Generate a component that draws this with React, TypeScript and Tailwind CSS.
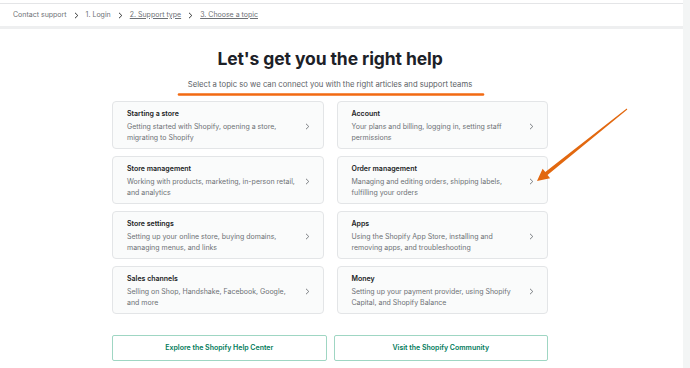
import React from "react";

const topics = [
  { title: "Starting a store", lines: ["Getting started with Shopify, opening a store,", "migrating to Shopify"] },
  { title: "Account", lines: ["Your plans and billing, logging in, setting staff", "permissions"] },
  { title: "Store management", lines: ["Working with products, marketing, in-person retail,", "and analytics"] },
  { title: "Order management", lines: ["Managing and editing orders, shipping labels,", "fulfilling your orders"] },
  { title: "Store settings", lines: ["Setting up your online store, buying domains,", "managing menus, and links"] },
  { title: "Apps", lines: ["Using the Shopify App Store, installing and", "removing apps, and troubleshooting"] },
  { title: "Sales channels", lines: ["Selling on Shop, Handshake, Facebook, Google,", "and more"] },
  { title: "Money", lines: ["Setting up your payment provider, using Shopify", "Capital, and Shopify Balance"] },
];

const Chevron = ({ className }: { className?: string }) => (
  <svg width="5" height="7" viewBox="0 0 5 7" className={className}>
    <path d="M1 0.8 L3.8 3.5 L1 6.2" fill="none" stroke="currentColor" strokeWidth="0.9" />
  </svg>
);

const App = () => {
  return (
    <div className="relative w-[690px] h-[368px] bg-white flex overflow-hidden font-['Inter',sans-serif]">
      <div className="w-[683px] flex flex-col">
        <div className="mt-[3px] border-t border-[#e4e5e7] h-[23px] flex items-center pl-[13px] text-[7px] text-[#6d7175] gap-[7px]">
          <span>Contact support</span>
          <Chevron className="text-[#202223]" />
          <span>1. Login</span>
          <Chevron className="text-[#202223]" />
          <span className="underline">2. Support type</span>
          <Chevron className="text-[#202223]" />
          <span className="underline">3. Choose a topic</span>
        </div>
        <div className="h-[3px] bg-[#eeeff0]" />

        <div className="ml-[112px] w-[436px] flex flex-col">
          <h1 className="mt-[19px] text-center text-[17.5px] leading-[22px] font-bold text-[#1c2127] tracking-[-0.1px]">
            Let's get you the right help
          </h1>
          <p className="mt-[9px] text-center text-[7.7px] leading-[11px] text-[#5c6166]">
            Select a topic so we can connect you with the right articles and support teams
          </p>

          <div className="mt-[11px] grid grid-cols-2 gap-x-[13px] gap-y-[7px]">
            {topics.map((t) => (
              <div
                key={t.title}
                className="h-[48px] rounded-[4px] border border-[#e3e5e7] bg-[#fafbfb] flex items-center pl-[14px] pr-[13px]"
              >
                <div className="flex-1">
                  <div className="text-[7px] leading-[11px] font-semibold text-[#202223]">{t.title}</div>
                  <div className="mt-[2px] text-[7px] leading-[11px] text-[#6d7175]">
                    {t.lines[0]}
                    <br />
                    {t.lines[1]}
                  </div>
                </div>
                <Chevron className="text-[#6d7175] mt-[2px]" />
              </div>
            ))}
          </div>

          <div className="mt-[21px] grid grid-cols-2 gap-x-[7px]">
            <div className="h-[26px] border border-[#9fd6c3] rounded-[2px] flex items-center justify-center text-[7px] font-semibold text-[#007a5a]">
              Explore the Shopify Help Center
            </div>
            <div className="h-[26px] border border-[#9fd6c3] rounded-[2px] flex items-center justify-center text-[7px] font-semibold text-[#007a5a]">
              Visit the Shopify Community
            </div>
          </div>
        </div>
      </div>
      <div className="w-[7px] bg-[#f3f5f5]" />

      <svg className="absolute inset-0 pointer-events-none" width="690" height="368">
        <line x1="179" y1="94.5" x2="483" y2="94.5" stroke="#f26a12" strokeWidth="2.6" strokeLinecap="round" />
        <polygon
          points="627.3,109.4 547.5,174.9 550.1,178.2 537,181 542.6,168.8 545.3,172.1 626.7,108.6"
          fill="#e2680f"
        />
      </svg>
    </div>
  );
};

export default App;
